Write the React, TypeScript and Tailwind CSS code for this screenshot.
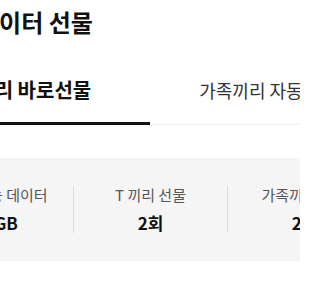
const stats = [
  { label: "선물 가능 데이터", value: "10GB" },
  { label: "T 끼리 선물", value: "2회" },
  { label: "가족끼리 선물", value: "2회" },
];

export default function App() {
  return (
    <div className="w-[300px] h-[300px] overflow-hidden bg-white font-['Noto_Sans_CJK_KR','Noto_Sans',sans-serif]">
      <div className="w-[490px] ml-[-95px]">
        {/* Title */}
        <h1 className="pl-[72px] pt-[5px] text-[24px] font-bold leading-[34px] text-[#111]">
          데이터 선물
        </h1>

        {/* Tabs */}
        <div className="mt-[21px] flex border-b border-[#f0f0f0]">
          <div className="w-1/2 -mb-px pt-[18px] pb-[19px] border-b-[3px] border-[#111] text-center text-[20px] font-bold leading-[24px] text-[#111]">
            T끼리 바로선물
          </div>
          <div className="w-1/2 pr-[10px] pt-[18px] pb-[22px] text-center text-[18px] leading-[24px] text-[#333]">
            가족끼리 자동선물
          </div>
        </div>

        {/* Summary */}
        <div className="mt-[33px] h-[103px] px-[14px] flex items-center bg-[#f5f5f5]">
          {stats.map((s, i) => (
            <div key={s.label} className="flex-1 flex items-center">
              {i > 0 && <div className="w-px h-[47px] bg-[#dcdcdc]" />}
              <div className="flex-1 flex flex-col items-center gap-[5px]">
                <span className="text-[15px] leading-[22px] text-[#555]">{s.label}</span>
                <span className="text-[17px] font-bold leading-[24px] text-[#111]">{s.value}</span>
              </div>
            </div>
          ))}
        </div>
      </div>
    </div>
  );
}
